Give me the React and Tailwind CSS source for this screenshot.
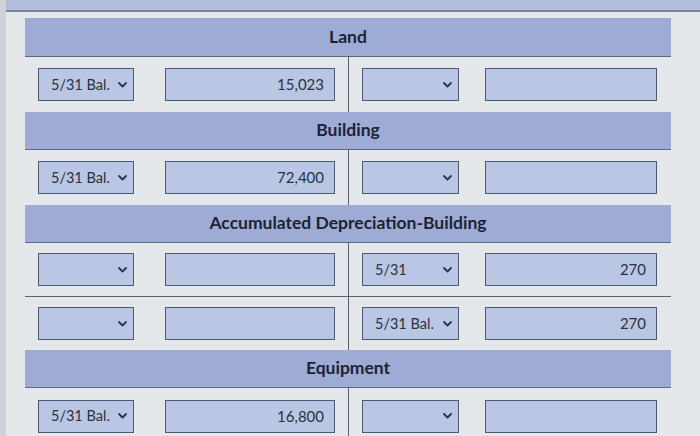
import React from "react";

const Chevron = () => (
  <svg width="9" height="6" viewBox="0 0 9 6" className="shrink-0">
    <polyline points="1,1 4.5,4.5 8,1" fill="none" stroke="#2a3350" strokeWidth="1.8" strokeLinecap="round" strokeLinejoin="round" />
  </svg>
);

const Select = ({ value, w = "w-[96px]" }) => (
  <div className={`${w} h-[33px] border border-[#4e5873] bg-[#b9c6e4] flex items-center justify-between pl-[12px] pr-[6px] text-[14.5px] text-[#2c3140]`}>
    <span>{value || ""}</span>
    <Chevron />
  </div>
);

const Input = ({ value, w = "w-[170px]" }) => (
  <div className={`${w} h-[33px] border border-[#4e5873] bg-[#b9c6e4] flex items-center justify-end pr-[10px] text-[15px] text-[#2c3140]`}>
    {value || ""}
  </div>
);

const Header = ({ title, h = "h-[39px]" }) => (
  <div className={`${h} bg-[#9eacd5] border-b border-[#5d6683] flex items-center justify-center font-bold text-[17.5px] text-[#1d2233]`}>
    {title}
  </div>
);

const Row = ({ l1, l2, r1, r2, h = "h-[55px]" }) => (
  <div className={`${h} grid grid-cols-[324px_1fr]`}>
    <div className="flex items-center pl-[13px] gap-[31px] border-r border-[#5a6072]">
      <Select value={l1} />
      <Input value={l2} />
    </div>
    <div className="flex items-center pl-[13px] gap-[26px]">
      <Select value={r1} w="w-[97px]" />
      <Input value={r2} w="w-[172px]" />
    </div>
  </div>
);

export default function App() {
  return (
    <div className="w-[700px] h-[436px] overflow-hidden bg-[#e5e8ea] relative" style={{ fontFamily: "Lato, 'Noto Sans', sans-serif" }}>
      <div className="h-[10px] bg-[#b2bddc]" />
      <div className="h-[2px] bg-[#7b86a6]" />
      <div className="absolute left-0 top-0 w-[6px] h-full bg-[#cfd3d9]" />
      <div className="pl-[25px] pr-[29px] pt-[6px]">
        <Header title="Land" />
        <Row l1="5/31 Bal." l2="15,023" />
        <Header title="Building" h="h-[38px]" />
        <Row l1="5/31 Bal." l2="72,400" />
        <Header title="Accumulated Depreciation-Building" h="h-[38px]" />
        <div className="border-b border-[#5a6072]">
          <Row r1="5/31" r2="270" h="h-[53px]" />
        </div>
        <Row r1="5/31 Bal." r2="270" h="h-[53px]" />
        <Header title="Equipment" h="h-[38px]" />
        <Row l1="5/31 Bal." l2="16,800" h="h-[56px]" />
      </div>
    </div>
  );
}
